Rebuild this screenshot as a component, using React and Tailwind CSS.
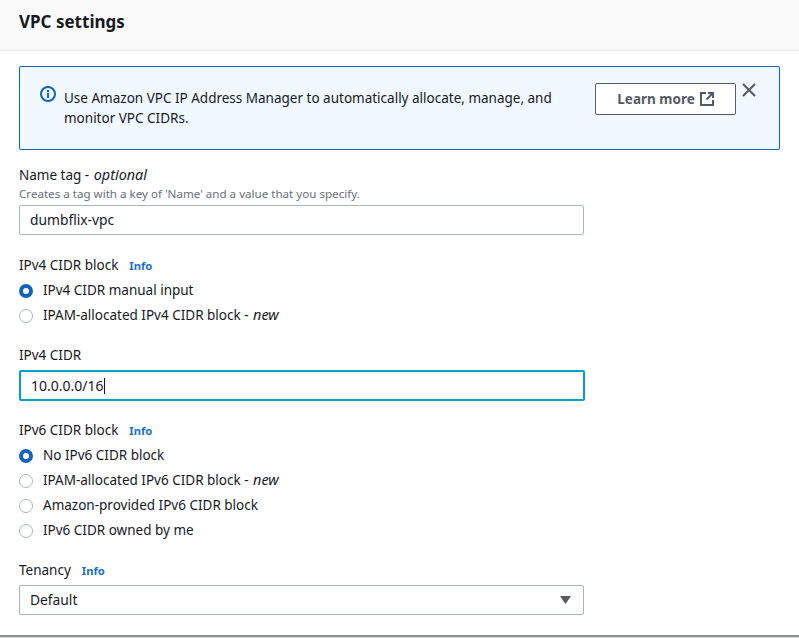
import { useState } from "react";

const font = "[font-family:'Noto_Sans',sans-serif]";

// Single radio row, selected one gets the thick blue ring
const Radio = ({ checked, children }) => (
  <div className="flex h-[25px] items-center">
    <span
      className={`h-[14px] w-[14px] shrink-0 rounded-full bg-white ${
        checked ? "border-[4px] border-[#0f65bb]" : "border border-[#aab7b8]"
      }`}
    />
    <span className="ml-[10px] text-[13.5px] text-[#16191f]">{children}</span>
  </div>
);

const Info = () => (
  <span className="ml-[11px] pt-[2px] text-[11.2px] font-bold text-[#1a6fc9]">Info</span>
);

const Label = ({ children, info }) => (
  <div className="flex h-[20px] items-center pb-[2px] text-[13.5px] text-[#16191f]">
    {children}
    {info && <Info />}
  </div>
);

// "new" / "optional" suffix runs a bit wider than the label text
const Suffix = ({ children }) => <i className="ml-[1px] text-[14.4px] leading-[0]">{children}</i>;

export default function App() {
  const [name] = useState("dumbflix-vpc");

  return (
    <div className={`h-[638px] w-[799px] overflow-hidden bg-white ${font}`}>
      {/* Panel header */}
      <div className="flex h-[51px] items-start border-b border-[#eaeded] bg-[#fafafa] px-[19px] pt-[8px]">
        <h2 className="text-[17px] leading-[27px] font-bold text-[#16191f]">VPC settings</h2>
      </div>

      <div className="flex h-[586px] flex-col border-b-2 border-[#879596] px-[19px] pt-[15px] shadow-[0_1px_0_#d5dbdb]">
        {/* Info alert */}
        <div className="flex h-[84px] w-[761px] rounded-[2px] border border-[#0f65bb] bg-[#f1f8ff] pt-[16px] pl-[20px]">
          <svg className="mt-[3px] shrink-0" width="16" height="16" viewBox="0 0 16 16" fill="none">
            <circle cx="8" cy="8" r="7" stroke="#0f65bb" strokeWidth="2" />
            <path d="M8 7v5" stroke="#0f65bb" strokeWidth="2" />
            <path d="M8 4v2" stroke="#0f65bb" strokeWidth="2" />
          </svg>
          <p className="ml-[8px] w-[510px] pt-[5px] text-[13.5px] leading-[20px] text-[#16191f]">
            Use Amazon VPC IP Address Manager to automatically allocate, manage, and monitor VPC CIDRs.
          </p>
          <button className="ml-[21px] flex h-[32px] w-[141px] items-center justify-center rounded-[2px] border border-[#545b64] bg-white pl-[1px] text-[13.5px] font-bold text-[#545b64]">
            Learn more
            <svg className="ml-[4px]" width="16" height="16" viewBox="0 0 16 16" fill="none" stroke="#545b64" strokeWidth="2">
              <path d="M7 2H2v12h12V9" />
              <path d="M9 2h5v5" />
              <path d="M14 2L7.5 8.5" />
            </svg>
          </button>
          <svg className="mt-[-1px] ml-[5px]" width="16" height="16" viewBox="0 0 16 16" fill="none" stroke="#545b64" strokeWidth="2">
            <path d="M2 2l12 12M14 2L2 14" />
          </svg>
        </div>

        {/* Name tag */}
        <div className="mt-[16px]">
          <Label>
            <span>
              Name tag - <Suffix>optional</Suffix>
            </span>
          </Label>
          <p className="h-[15px] text-[11.6px] leading-[15px] text-[#687078]">
            Creates a tag with a key of 'Name' and a value that you specify.
          </p>
          <div className="mt-[4px] flex h-[30px] w-[565px] items-center rounded-[2px] border border-[#aab7b8] px-[10px] text-[13.8px] text-[#16191f]">
            {name}
          </div>
        </div>

        {/* IPv4 block */}
        <div className="mt-[21px]">
          <Label info>IPv4 CIDR block</Label>
          <div className="mt-[2px]">
            <Radio checked>IPv4 CIDR manual input</Radio>
            <Radio>
              IPAM-allocated IPv4 CIDR block - <Suffix>new</Suffix>
            </Radio>
          </div>
        </div>

        <div className="mt-[18px]">
          <Label>IPv4 CIDR</Label>
          <div className="mt-[4px] flex h-[31px] w-[566px] items-center rounded-[2px] border-2 border-[#00a1c9] px-[10px] text-[14px] text-[#16191f]">
            10.0.0.0/16
            <span className="h-[16px] w-px bg-[#16191f]" />
          </div>
        </div>

        {/* IPv6 block */}
        <div className="mt-[20px]">
          <Label info>IPv6 CIDR block</Label>
          <div className="mt-[2px]">
            <Radio checked>No IPv6 CIDR block</Radio>
            <Radio>
              IPAM-allocated IPv6 CIDR block - <Suffix>new</Suffix>
            </Radio>
            <Radio>Amazon-provided IPv6 CIDR block</Radio>
            <Radio>IPv6 CIDR owned by me</Radio>
          </div>
        </div>

        {/* Tenancy */}
        <div className="mt-[18px]">
          <Label info>Tenancy</Label>
          <div className="mt-[4px] flex h-[30px] w-[565px] items-center justify-between rounded-[2px] border border-[#aab7b8] pr-[12px] pl-[10px] text-[13.8px] text-[#16191f]">
            Default
            <svg width="11" height="8" viewBox="0 0 11 8">
              <path d="M0 0h11L5.5 8z" fill="#545b64" />
            </svg>
          </div>
        </div>
      </div>
    </div>
  );
}
